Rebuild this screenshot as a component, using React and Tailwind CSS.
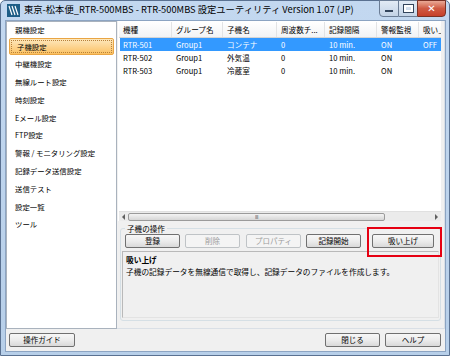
import React from 'react';

const menu = [
  '親機設定',
  '子機設定',
  '中継機設定',
  '無線ルート設定',
  '時刻設定',
  'Eメール設定',
  'FTP設定',
  '警報 / モニタリング設定',
  '記録データ送信設定',
  '送信テスト',
  '設定一覧',
  'ツール',
];

const cols = [
  { label: '機種', w: 'w-[53px]' },
  { label: 'グループ名', w: 'w-[51px]' },
  { label: '子機名', w: 'w-[54px]' },
  { label: '周波数チ...', w: 'w-[48px]' },
  { label: '記録間隔', w: 'w-[52px]' },
  { label: '警報監視', w: 'w-[42px]' },
  { label: '吸い上げ', w: 'w-[22px]' },
];

const rows = [
  ['RTR-501', 'Group1', 'コンテナ', '0', '10 min.', 'ON', 'OFF'],
  ['RTR-502', 'Group1', '外気温', '0', '10 min.', 'ON', ''],
  ['RTR-503', 'Group1', '冷蔵室', '0', '10 min.', 'ON', ''],
];

function AppIcon() {
  return (
    <svg width="13" height="13" viewBox="0 0 13 13" className="shrink-0">
      <rect x="0" y="0" width="13" height="13" fill="#1d5d86" />
      <path d="M2 2 L5 11 M5 2 L8 11 M8 2 L11 11" stroke="#ffffff" strokeWidth="1.2" fill="none" />
    </svg>
  );
}

function Btn({ children, className = '', disabled = false }) {
  return (
    <div
      className={`h-[14px] flex items-center justify-center rounded-[2px] border text-[7.5px] leading-none ${
        disabled
          ? 'border-[#bfc3c6] bg-[#f4f4f4] text-[#9c9c9c]'
          : 'border-[#707070] bg-gradient-to-b from-[#f7f7f7] via-[#ececec] to-[#d9d9d9] text-black'
      } ${className}`}
    >
      {children}
    </div>
  );
}

export default function App() {
  return (
    <div className="relative w-[450px] h-[356px] overflow-hidden font-['Noto_Sans_CJK_JP','Noto_Sans',sans-serif] text-black">
      <div className="w-full h-full flex flex-col border border-[#5a7191] rounded-t-[5px] bg-gradient-to-b from-[#c3d8f0] to-[#b7cfe9] pl-[4px] pr-[3px] pb-[3px]">
        {/* title bar */}
        <div className="h-[19px] flex items-start shrink-0">
          <div className="flex items-center gap-[4px] h-[18px] pl-[2px]">
            <AppIcon />
            <span className="text-[9.3px] leading-none whitespace-nowrap">
              東京-松本便_RTR-500MBS - RTR-500MBS 設定ユーティリティ Version 1.07 (JP)
            </span>
          </div>
          <div className="ml-auto flex h-[17px] -mt-[1px]">
            <div className="w-[20px] h-full border border-[#6b7d95] rounded-bl-[4px] bg-gradient-to-b from-[#e2ebf5] to-[#c3d3e6] flex items-center justify-center">
              <div className="w-[8px] h-[2px] bg-white border border-[#33455c] mt-[5px]" />
            </div>
            <div className="w-[18px] h-full border-y border-[#6b7d95] bg-gradient-to-b from-[#e2ebf5] to-[#c3d3e6] flex items-center justify-center">
              <div className="w-[9px] h-[7px] border-[2px] border-white outline outline-1 outline-[#33455c]" />
            </div>
            <div className="w-[29px] h-full border border-[#7a3125] rounded-br-[4px] bg-gradient-to-b from-[#e9a996] via-[#cf5a43] to-[#c6402a] flex items-center justify-center">
              <span className="text-white text-[10px] font-bold leading-none font-['DejaVu_Sans',sans-serif]">✕</span>
            </div>
          </div>
        </div>

        {/* client area */}
        <div className="flex-1 flex flex-col bg-[#f0f0f0] border border-[#8ca4c2]">
          <div className="h-[308px] flex">
            {/* sidebar */}
            <div className="w-[112px] h-full bg-white border border-[#a9b2bd] px-[2px] text-[7.4px] leading-none">
              {menu.map((m, i) =>
                i === 1 ? (
                  <div
                    key={m}
                    className="h-[17px] rounded-[2px] border border-[#e9a544] bg-gradient-to-b from-[#fde8bd] to-[#fbc160] p-[1px]"
                  >
                    <div className="h-full border border-dotted border-[#b7803a] flex items-center pl-[5px]">{m}</div>
                  </div>
                ) : (
                  <div key={m} className={`${i === 0 ? 'h-[16px]' : 'h-[17.8px]'} flex items-center pl-[6px] whitespace-nowrap`}>
                    {m}
                  </div>
                )
              )}
            </div>

            {/* right panel */}
            <div className="flex-1 h-full flex flex-col pl-[1px] pr-[3px] border-r border-b border-[#d9dfe6]">
              {/* table */}
              <div className="h-[200px] bg-white flex flex-col pl-[1px] pt-[1px]">
                <div className="h-[16px] flex bg-gradient-to-b from-white to-[#f2f3f5] border-b border-[#d5d5d5] text-[7.6px] leading-none">
                  {cols.map((c, i) => (
                    <div
                      key={c.label}
                      className={`${c.w} h-full flex items-center pl-[4px] whitespace-nowrap overflow-hidden ${i < cols.length - 1 ? 'border-r border-[#e2e3e5]' : ''}`}
                    >
                      {c.label}
                    </div>
                  ))}
                </div>
                {rows.map((r, ri) => (
                  <div
                    key={r[0]}
                    className={`h-[13px] flex text-[7.6px] leading-none ml-[1px] ${ri === 0 ? 'bg-[#3399ff] text-white' : ''}`}
                  >
                    {r.map((v, ci) => (
                      <div key={ci} className={`${cols[ci].w} ${ci === 0 ? '-ml-[1px]' : ''} h-full flex items-center pl-[4px] whitespace-nowrap overflow-hidden`}>
                        {v}
                      </div>
                    ))}
                  </div>
                ))}
                <div className="flex-1" />
                {/* horizontal scrollbar */}
                <div className="h-[10px] flex items-center bg-[#ebebeb] border-t border-[#e0e0e0] px-[2px] gap-[2px]">
                  <svg width="5" height="6" viewBox="0 0 5 6"><path d="M4 0 L1 3 L4 6 Z" fill="#606060" /></svg>
                  <div className="w-[257px] h-[8px] rounded-[2px] border border-[#9a9a9a] bg-gradient-to-b from-[#f3f3f3] to-[#d6d6d6] flex items-center justify-center">
                    <span className="text-[5px] leading-none text-[#555] tracking-[-0.5px]">III</span>
                  </div>
                  <div className="flex-1" />
                  <svg width="5" height="6" viewBox="0 0 5 6"><path d="M1 0 L4 3 L1 6 Z" fill="#606060" /></svg>
                </div>
              </div>

              {/* group box */}
              <fieldset className="mt-[4px] ml-[2px] border border-[#d5dfe5] rounded-[3px] px-[1px] pb-[2px] flex-1 flex flex-col">
                <legend className="text-[7.6px] leading-none px-[2px] ml-[3px]">子機の操作</legend>
                <div className="flex items-center mt-[1px] pl-[3px]">
                  <Btn className="w-[55px]">登録</Btn>
                  <Btn className="w-[55px] ml-[5px]" disabled>削除</Btn>
                  <Btn className="w-[55px] ml-[6px]" disabled>プロパティ</Btn>
                  <Btn className="w-[55px] ml-[5px]">記録開始</Btn>
                  <Btn className="w-[62px] ml-[11px]">吸い上げ</Btn>
                </div>
                <div className="mt-[3px] flex-1 bg-[#f0f0f0] border border-[#b9b9b9] border-r-[#e3e3e3] border-b-[#e3e3e3] pl-[3px] pt-[2px] text-[7.7px] leading-[12px]">
                  <div className="font-bold">吸い上げ</div>
                  <div>子機の記録データを無線通信で取得し、記録データのファイルを作成します。</div>
                </div>
              </fieldset>
              <div className="h-[7px]" />
            </div>
          </div>

          {/* bottom buttons */}
          <div className="flex-1 flex items-start pt-[4px] pl-[3px] pr-[4px]">
            <Btn className="w-[66px]">操作ガイド</Btn>
            <div className="flex-1" />
            <Btn className="w-[55px]">閉じる</Btn>
            <Btn className="w-[56px] ml-[5px]">ヘルプ</Btn>
          </div>
        </div>
      </div>

      {/* red highlight around 吸い上げ */}
      <div className="absolute left-[367px] top-[227px] w-[75px] h-[30px] border-2 border-[#e60012] pointer-events-none" />
    </div>
  );
}
